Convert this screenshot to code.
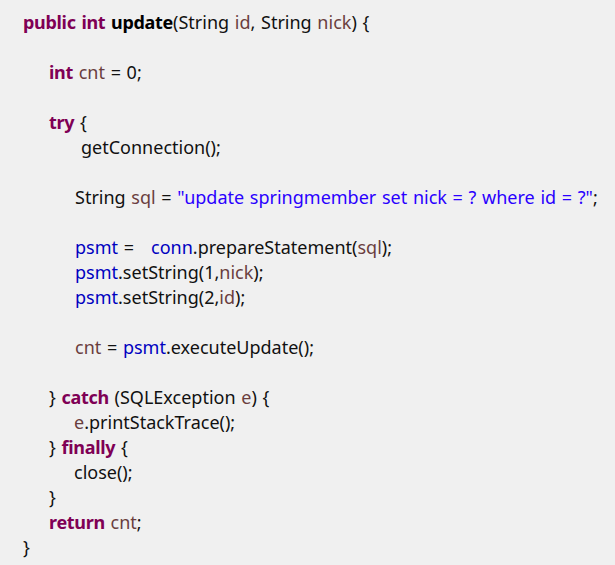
import React from 'react';

type Tok = [string, string?];

const K = 'text-[#7f0055] font-bold tracking-[-0.3px]';
const V = 'text-[#6a3e3e]';
const F = 'text-[#0000c0]';
const S = 'text-[#2a00ff]';

// each line: indent in px + tokens; null = blank line
const lines: ({ pad: string; toks: Tok[] } | null)[] = [
  { pad: 'pl-[23px]', toks: [['public', K], [' '], ['int', K], [' '], ['update', 'font-bold text-black tracking-[-0.3px]'], ['(String '], ['id', V], [', String '], ['nick', V], [') {']] },
  null,
  { pad: 'pl-[49px]', toks: [['int', K], [' '], ['cnt', V], [' = 0;']] },
  null,
  { pad: 'pl-[49px]', toks: [['try', K], [' {']] },
  { pad: 'pl-[81px]', toks: [['getConnection();']] },
  null,
  { pad: 'pl-[75px]', toks: [['String '], ['sql', V], [' = '], ['"update springmember set nick = ? where id = ?"', S], [';']] },
  null,
  { pad: 'pl-[75px]', toks: [['psmt', F], [' =   '], ['conn', F], ['.prepareStatement('], ['sql', V], [');']] },
  { pad: 'pl-[75px]', toks: [['psmt', F], ['.setString(1,'], ['nick', V], [');']] },
  { pad: 'pl-[75px]', toks: [['psmt', F], ['.setString(2,'], ['id', V], [');']] },
  null,
  { pad: 'pl-[75px]', toks: [['cnt', V], [' = '], ['psmt', F], ['.executeUpdate();']] },
  null,
  { pad: 'pl-[49px]', toks: [['} '], ['catch', K], [' (SQLException '], ['e', V], [') {']] },
  { pad: 'pl-[74px]', toks: [['e', V], ['.printStackTrace();']] },
  { pad: 'pl-[49px]', toks: [['} '], ['finally', K], [' {']] },
  { pad: 'pl-[74px]', toks: [['close();']] },
  { pad: 'pl-[49px]', toks: [['}']] },
  { pad: 'pl-[49px]', toks: [['return', K], [' '], ['cnt', V], [';']] },
  { pad: 'pl-[23px]', toks: [['}']] },
];

export default function App() {
  return (
    <div className="w-[615px] h-[565px] bg-[#f0f0f0] pt-[10px] text-[#111] text-[18px] leading-[25px] [word-spacing:1px] font-['Noto_Sans',sans-serif] overflow-hidden">
      {lines.map((ln, i) =>
        ln ? (
          <div key={i} className={`h-[25px] whitespace-pre ${ln.pad}`}>
            {ln.toks.map(([t, c], j) => (
              <span key={j} className={c}>{t}</span>
            ))}
          </div>
        ) : (
          <div key={i} className="h-[25px]" />
        )
      )}
    </div>
  );
}
